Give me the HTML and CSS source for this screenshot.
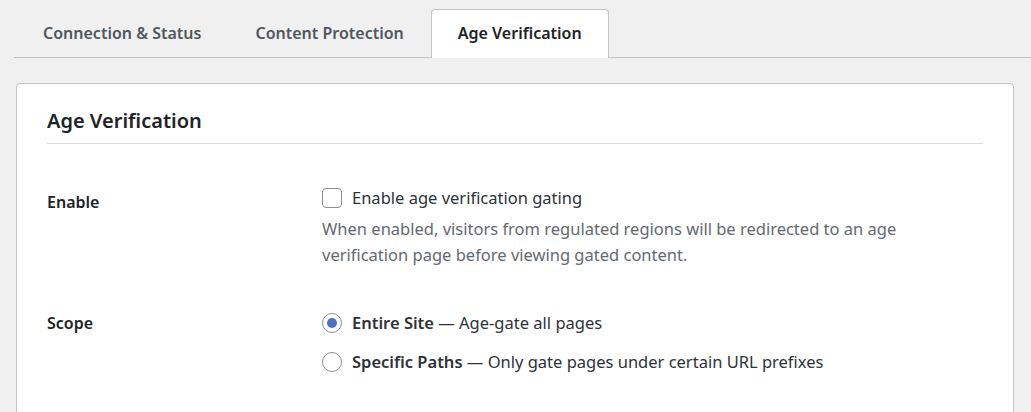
FILE: index.html
```html
<!DOCTYPE html>
<html lang="en">
  <head>
    <title>Age Verification</title>
    <link rel="stylesheet" href="styles.css">
  </head>

  <body>
    <!-- Tabs -->
    <nav class="tabs">
      <a class="tab">Connection &amp; Status</a>
      <a class="tab">Content Protection</a>
      <a class="tab tab-active">Age Verification</a>
    </nav>

    <!-- Settings card -->
    <section class="card">
      <h2 class="card-title">Age Verification</h2>

      <div class="row">
        <div class="row-label">Enable</div>
        <div class="row-field">
          <label class="option">
            <span class="checkbox"></span>
            Enable age verification gating
          </label>
          <p class="description">
            When enabled, visitors from regulated regions will be redirected to an age
            verification page before viewing gated content.
          </p>
        </div>
      </div>

      <div class="row">
        <div class="row-label">Scope</div>
        <div class="row-field radios">
          <label class="option">
            <span class="radio radio-checked"></span>
            <span><b>Entire Site</b> — Age-gate all pages</span>
          </label>
          <label class="option option-next">
            <span class="radio"></span>
            <span><b>Specific Paths</b> — Only gate pages under certain URL prefixes</span>
          </label>
        </div>
      </div>
    </section>
  </body>
</html>
```

FILE: styles.css
```css
body {
  margin: 0;
  background: #f0f0f1;
  color: #1d2327;
  font-family: "Noto Sans", "Open Sans", sans-serif;
  font-size: 16px;
}
.tabs {
  display: flex;
  margin: 9px 0 0 14px;
  padding-left: 2px;
  border-bottom: 1px solid #c3c4c7;
}
.tab {
  margin-bottom: -1px;
  padding: 11px 26px 12px;
  border: 1px solid transparent;
  border-bottom: none;
  border-radius: 4px 4px 0 0;
  color: #50575e;
  font-size: 16px;
  font-weight: 600;
  line-height: 24px;
}
.tab-active {
  padding-bottom: 13px;
  border-color: #c3c4c7;
  background: #fff;
  color: #1d2327;
}
.card {
  margin: 25px 17px 0 16px;
  padding: 0 30px 40px;
  border: 1px solid #c3c4c7;
  border-radius: 4px;
  background: #fff;
}
.card-title {
  margin: 0 0 41px;
  padding: 23px 0 8px;
  border-bottom: 1px solid #dcdcde;
  font-size: 20px;
  font-weight: 600;
  line-height: 28px;
}
.row {
  display: flex;
  margin-bottom: 38px;
}
.row-label {
  flex: 0 0 275px;
  padding-top: 4px;
  font-weight: 600;
  line-height: 26px;
}
.row-field {
  font-size: 16.5px;
  line-height: 26px;
}
.radios {
  padding-top: 4px;
}
.option {
  display: flex;
  align-items: center;
  gap: 10px;
  color: #2c3338;
}
.option b {
  font-weight: 600;
}
.option-next {
  margin-top: 13px;
}
.checkbox {
  width: 18px;
  height: 18px;
  border: 1px solid #8c8f94;
  border-radius: 4px;
}
.radio {
  position: relative;
  width: 18px;
  height: 18px;
  border: 1px solid #8c8f94;
  border-radius: 50%;
}
.radio-checked::after {
  content: "";
  position: absolute;
  top: 4px;
  left: 4px;
  width: 10px;
  height: 10px;
  border-radius: 50%;
  background: #4a72c4;
}
.description {
  margin: 5px 0 0;
  color: #646970;
  max-width: 600px;
}
```
